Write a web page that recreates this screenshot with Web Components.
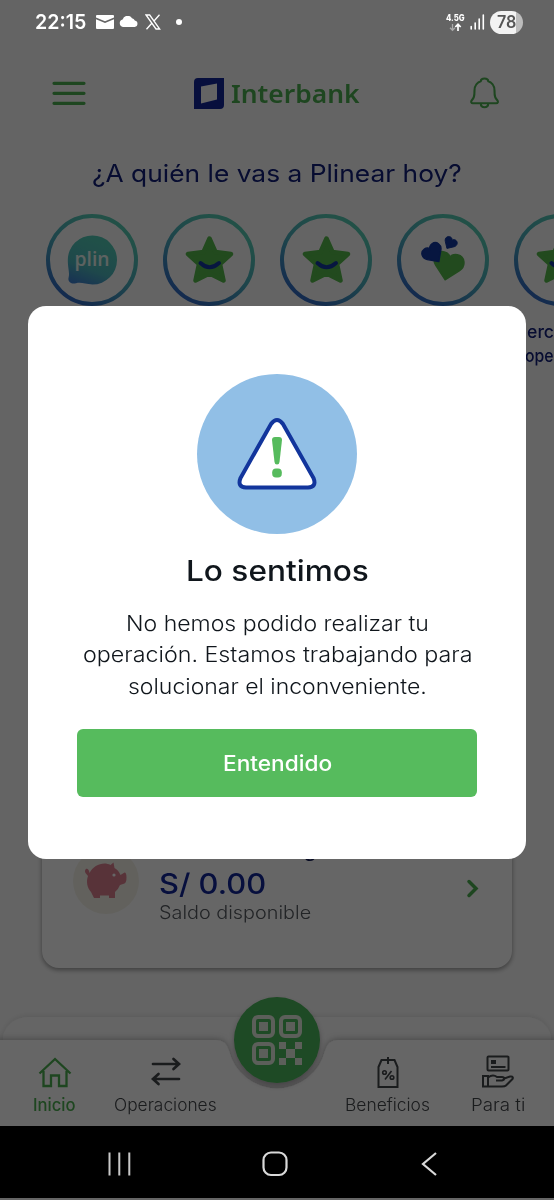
<!DOCTYPE html>
<html lang="es"><head><meta charset="utf-8"><title>Interbank</title>
<style>
html,body{margin:0;width:554px;height:1200px;overflow:hidden;background:#000}
body{font-family:Inter,"Noto Sans",sans-serif}
</style></head><body>
<bank-app></bank-app>
<script>
const define=(name,html,extra)=>{
  const t=document.createElement('template');t.innerHTML=html;
  customElements.define(name,class extends HTMLElement{
    constructor(){super();this.attachShadow({mode:'open'}).append(t.content.cloneNode(true));}
    connectedCallback(){if(extra)extra(this,this.shadowRoot);}
  });
};

/* One line of text set to a given width: w = width in px */
define('fit-text',`<style>:host{display:block;white-space:nowrap;text-align:left;flex:none}
span{display:inline-block;transform-origin:0 50%}</style><span><slot></slot></span>`,(h,r)=>{
  const w=+h.getAttribute('w'),s=r.querySelector('span');
  h.style.width=w+'px';
  s.style.transform='scaleX('+w/s.offsetWidth+')';
});

define('status-bar',`<style>
:host{display:flex;height:44px;box-sizing:border-box;padding:0 31px 0 35px;align-items:center;color:#fff;position:relative;z-index:3}
.time{font:600 20px/44px Inter,sans-serif}
svg{display:block;flex:none}
.net{font:800 9px/10px Inter,sans-serif;margin-left:auto;margin-right:5px}
.bat{width:33px;height:23px;border-radius:12px;background:linear-gradient(90deg,#f2f2f2 78%,#bcbcbc 78%);color:#555;
font:600 17px/23px Inter,sans-serif;padding-left:7px;box-sizing:border-box;margin-left:5px}
</style>
<fit-text class="time" w="51">22:15</fit-text>
<svg width="18" height="14" viewBox="0 0 18 14" style="margin-left:10px"><path d="M1 0h16Q18 0 18 1v1.500L9 6.300 0 2.500V1Q0 0 1 0zM0 4.200l9 3.800 9-3.800V13q0 1-1 1H1Q0 14 0 13z" fill="#fff"/></svg>
<svg width="19" height="12" viewBox="0 0 19 12" style="margin-left:5px"><path d="M4 11a3.900 3.900 0 0 1-.4-7.600A5.200 5.200 0 0 1 13 2.300 4.200 4.200 0 0 1 15.800 4.500 3.300 3.300 0 0 1 15.700 11z" fill="#fff"/></svg>
<svg width="16" height="16" viewBox="0 0 16 16" style="margin-left:7px"><path d="M1 1h3.700l10 14H11zM14.500.700 9 7M6.800 9.200 1.500 15.300" fill="none" stroke="#fff" stroke-width="1.300"/></svg>
<svg width="6" height="6" style="margin-left:15px"><circle cx="3" cy="3" r="3" fill="#fff"/></svg>
<div class="net"><fit-text w="19">4.5G</fit-text><svg width="18" height="9" viewBox="0 0 18 9"><path d="M6.500 1v6M4 4.800l2.500 2.500L9 4.800" fill="none" stroke="#aaa" stroke-width="1.300"/><path d="M12 8V1.500M9.300 4 12 1.300 14.700 4" fill="none" stroke="#fff" stroke-width="1.700"/></svg></div>
<svg width="15" height="16" viewBox="0 0 15 16"><path d="M1.200 12.500V15M5.200 9V15M9.200 5V15M13.300 1V15" stroke="#fff" stroke-width="1.600" stroke-linecap="round"/></svg>
<div class="bat"><fit-text w="19">78</fit-text></div>`);

define('app-header',`<style>
:host{display:flex;height:98px;box-sizing:border-box;padding:0 55px 0 52px;align-items:center;justify-content:space-between}
svg{display:block;flex:none}.logo{display:flex;align-items:center;margin-left:-2px;gap:7px;color:#4cae50;font:600 26px/31px "Noto Sans",sans-serif}
</style>
<svg width="34" height="28" viewBox="0 0 34 28"><path d="M2 4.300h30M2 14.300h30M2 24.300h30" stroke="#4cae50" stroke-width="3.200" stroke-linecap="round"/></svg>
<div class="logo"><svg width="30" height="31" viewBox="0 0 30 31"><path fill-rule="evenodd" d="M4 0h26v27q0 4-4 4H0V4q0-4 4-4zM7 8.500v17l16-4v-16z" fill="#12279a"/></svg><fit-text w="129">Interbank</fit-text></div>
<svg width="29" height="32" viewBox="0 0 29 32"><path d="M4.500 13.500C4.500 8 8 5 10.700 4.200c.3-3.700 7.300-3.700 7.600 0 2.700.800 6.200 3.800 6.200 9.300 0 6.500.8 7.500 2.600 9.500 1.500 1.700.7 3.300-1 3.300H3c-1.700 0-2.500-1.600-1-3.300 1.700-2 2.500-3 2.500-9.500zM10.800 26.500c0 5 7.400 5 7.400 0" fill="none" stroke="#4cae50" stroke-width="2.100"/></svg>`);

const star='<path d="M24.500 3 30.500 16.500 46 18.500 35 28.500 38.500 45 24.500 38 10.500 45 14 28.500 3 18.500 18.500 16.500z" fill="#55b84b" stroke="#55b84b" stroke-width="4.500" stroke-linejoin="round"/><path d="M15.500 27.500q9 8.500 18.500 0" fill="none" stroke="#1237a0" stroke-width="4" stroke-linecap="round"/>';
const plin='<defs><linearGradient id="b" x1=".2" y1="1" x2=".55" y2=".1"><stop offset="0" stop-color="#3d7fd0"/><stop offset=".4" stop-color="#4db5bb"/><stop offset="1" stop-color="#52c8b5"/></linearGradient></defs><path d="M24.500 0A24.500 24.500 0 0 1 24.500 49C17 48.500 13 46.200 8 47.700 3 49-.5 46 .6 42c1.300-5-.8-9-.8-17.500A24.500 24.500 0 0 1 24.500 0z" fill="url(#b)"/><text x="6.500" y="30" font-family="Open Sans,sans-serif" font-weight="600" font-size="20" textLength="35" lengthAdjust="spacingAndGlyphs" fill="#e8f6f2">plin</text>';
const heartPath='<path d="M0 10L-9 1C-13-3-11-10-5-10-2-10 0-8 0-6 0-8 2-10 5-10 11-10 13-3 9 1Z" stroke-width="1.500" stroke-linejoin="round" ';
const hearts=heartPath+'transform="translate(29 31) rotate(12) scale(1.330)" fill="#55b84b" stroke="#55b84b"/>'
 +heartPath+'transform="translate(14.500 18.500) rotate(-35) scale(.930)" fill="#1237a0" stroke="#1237a0"/>'
 +heartPath+'transform="translate(31 8) rotate(32) scale(.580)" fill="#1237a0" stroke="#1237a0"/>';
define('contact-ring',`<style>:host{display:block;width:92px;flex:none;color:#12207a}svg{display:block}
.l{font:500 18px/24px Inter,sans-serif;margin-top:14px;width:40px;display:flex;flex-direction:column;align-items:flex-end}</style>
<svg width="92" height="92" viewBox="0 0 92 92"><defs><linearGradient id="g" x1=".2" y1=".9" x2=".7" y2=".1"><stop offset="0" stop-color="#326cc4"/><stop offset=".5" stop-color="#4aabbb"/><stop offset="1" stop-color="#55c9b2"/></linearGradient></defs><circle cx="46" cy="46" r="44" fill="none" stroke="url(#g)" stroke-width="4"/><g class="i" transform="translate(22 21.500)"></g></svg>
<div class="l"><slot></slot></div>`,(h,r)=>{
  const k=h.getAttribute('kind');
  r.querySelector('.i').innerHTML=k=='plin'?plin:k=='hearts'?hearts:star;
});

define('plin-section',`<style>:host{display:block;height:288px}
.t{font:400 24px/32px Inter,sans-serif;color:#12207a;display:flex;justify-content:center;padding-top:16px}
.r{display:flex;gap:25px;padding:24px 0 0 46px}</style>
<div class="t"><fit-text w="370">¿A quién le vas a Plinear hoy?</fit-text></div>
<div class="r"><contact-ring kind="plin"></contact-ring><contact-ring kind="star"></contact-ring><contact-ring kind="star"></contact-ring><contact-ring kind="hearts"></contact-ring><contact-ring kind="star"><fit-text w="43">Merc</fit-text><fit-text w="29">ope</fit-text></contact-ring></div>`);

define('account-card',`<style>:host{display:flex;margin:350px 42px 0;height:188px;background:#fff;border-radius:17px;box-sizing:border-box;padding:0 33px 0 31px;box-shadow:0 2px 5px #0006;align-items:flex-start}
.pig{width:66px;height:66px;border-radius:50%;background:#f5f3e9;margin-top:68px}
.tx{margin:59px auto 0 20px;display:grid;width:160px}
.n{font:600 19px/23px Inter,sans-serif;color:#111a55}.a{font:500 28px/38px Inter,sans-serif;color:#12279a;margin-top:3px}.s{font:300 18px/21px Inter,sans-serif;color:#555a60;margin-top:-1px}
svg{display:block}.c{margin-top:99px}</style>
<svg class="pig" viewBox="0 0 66 66"><path d="M12.500 25c-2-4 3-7 4 0 4-8 14-12 21-8l3-2.500 1 5.500q4 2 6 7l4-2.500q2 0 2 5t-2 6l-4.500 1.500q-2 5-5 7v6h-6v-2.500H27V50h-6l-3-6C14 40 13 33 15 28z" fill="#dc7f90"/><circle cx="41" cy="27" r="1.600" fill="#fff"/></svg>
<div class="tx"><fit-text class="n" w="157">Cuenta Sueldo g</fit-text><fit-text class="a" w="107">S/ 0.00</fit-text><fit-text class="s" w="152">Saldo disponible</fit-text></div>
<svg class="c" width="13" height="19" viewBox="0 0 13 19"><path d="M3 2.500l7 7-7 7" fill="none" stroke="#4cae50" stroke-width="3.500" stroke-linecap="round"/></svg>`);

define('tab-item',`<style>:host{display:flex;flex-direction:column;align-items:center;color:#43464a;flex:none}
:host([on]){color:#4cae50}
svg{display:block;width:36px;height:36px;fill:none;stroke:currentColor;stroke-width:2}
fit-text{font:300 17px/22px Inter,sans-serif;margin-top:4px}:host([on]) fit-text{font-weight:500}</style>
<svg viewBox="0 0 36 36"></svg><fit-text><slot></slot></fit-text>`,(h,r)=>{
  const I={home:'<path d="M2.500 19.500 18 5l15.500 14.500M6.500 17V32H14V21.500h8V32h7.500V17" stroke-width="2.300"/>',
  ops:'<path d="M5 10h25M25.500 5l5.500 5-5.500 5M31 25H6M10.500 20 5 25l5.500 5" stroke-width="2.700" stroke-linecap="round"/>',
  ben:'<path d="M8.500 13l3-7h13l3 7v20h-19zM18 3v7"/><circle cx="14.500" cy="18.500" r="1.800" stroke-width="1.600"/><circle cx="22" cy="23.500" r="1.800" stroke-width="1.600"/><path d="M21.500 17 15 25.500" stroke-width="1.600"/>',
  para:'<rect x="7.500" y="2.500" width="21" height="14" rx="1"/><path d="M11 13h14.500M3 22h5v10.500H3zM8 23.500c4-3 7-2 9-.500h5c3 0 3 3 0 3.500h-6M23 25l7-2.500c3-.600 3.500 1.500 2 3L26 31.500q-1 1-4 1H8"/><rect x="12" y="7" width="3" height="2"/>'};
  r.querySelector('svg').innerHTML=I[h.getAttribute('icon')];
});

define('tab-bar',`<style>:host{display:block;position:relative;height:110px;margin-top:48px}
.bg{position:absolute;left:0;top:-30px;overflow:hidden}
.row{position:relative;display:flex;justify-content:space-between;padding:38px 29px 0 33px}
.g{display:flex;gap:38px}.g+.g{gap:41px}</style>
<svg class="bg" width="554" height="140" viewBox="0 0 554 140"><defs><filter id="s" x="-20%" y="-40%" width="140%" height="180%"><feDropShadow dx="0" dy="-1" stdDeviation="3" flood-color="#000" flood-opacity=".28"/></filter><filter id="q" x="-30%" y="-30%" width="160%" height="160%"><feDropShadow dx="0" dy="3" stdDeviation="2.500" flood-color="#554455" flood-opacity=".45"/></filter></defs>
<path d="M3 140V50Q9 31 30 31H524Q545 31 551 50V140z" fill="#fff" filter="url(#s)" opacity=".4"/>
<path d="M-10 160V54H216Q226 54 229 65A49.500 49.500 0 0 0 325 65Q328 54 338 54H564V160z" fill="#fff" filter="url(#s)"/>
<circle cx="277" cy="54" r="43" fill="#4cb85c" filter="url(#q)"/>
<g fill="none" stroke="#e5eee1" stroke-width="4"><rect x="254" y="31" width="19" height="19" rx="4"/><rect x="281" y="31" width="19" height="19" rx="4"/><rect x="254" y="58" width="19" height="19" rx="4"/></g>
<path d="M259 36h9v9h-9zM286 36h9v9h-9zM259 63h9v9h-9zM279 56h7v7h-7zM295 56h7v7h-7zM286 63h9v9h-9zM279 72h7v7h-7zM295 72h7v7h-7z" fill="#e5eee1"/></svg>
<div class="row"><div class="g"><tab-item icon="home" on w="43">Inicio</tab-item><tab-item icon="ops" w="103">Operaciones</tab-item></div><div class="g"><tab-item icon="ben" w="85">Beneficios</tab-item><tab-item icon="para" w="54">Para ti</tab-item></div></div>`,(h,r)=>{
  r.querySelectorAll('tab-item').forEach(t=>{
    const f=t.shadowRoot.querySelector('fit-text'),s=f.shadowRoot.querySelector('span'),w=+t.getAttribute('w');
    f.style.width=w+'px';s.style.transform='scaleX('+w/s.offsetWidth+')';
  });
});

define('system-nav',`<style>:host{display:block;height:72px;background:#000;border-bottom:2px solid #666;position:relative;z-index:3}
div{display:flex;justify-content:space-between;align-items:center;height:76px;padding:0 116px 0 107px}svg:nth-child(2){margin-left:-2px}</style>
<div><svg width="24" height="26"><path d="M2.500 1.500v23M12.300 1.500v23M22.300 1.500v23" stroke="#c9c9c9" stroke-width="2"/></svg>
<svg width="26" height="26"><rect x="1.500" y="1.500" width="23" height="22.500" rx="7.500" fill="none" stroke="#d9d9d9" stroke-width="2.200"/></svg>
<svg width="18" height="26"><path d="M16 2 3 13l13 11" fill="none" stroke="#d9d9d9" stroke-width="2.200"/></svg></div>`);

define('error-dialog',`<style>:host{position:absolute;z-index:2;left:0;top:0;width:554px;height:1126px;background:#0009;display:block}
.b{margin:306px 28px 0;height:553px;background:#fff;border-radius:18px;box-sizing:border-box;padding-top:68px;display:flex;flex-direction:column;align-items:center}
svg{display:block}h1{margin:19px 0 0;font:500 29px/36px Inter,sans-serif;color:#10161c}
.p{margin-top:19px;font:300 21px/31.300px Inter,sans-serif;color:#10161c;display:flex;flex-direction:column;align-items:center}
button{all:unset;margin-top:27px;width:400px;height:68px;border-radius:6px;background:#56bb5d;color:#fff;font:500 21px/70px Inter,sans-serif;display:flex;justify-content:center}</style>
<div class="b"><svg width="160" height="160" viewBox="0 0 160 160"><circle cx="80" cy="80" r="80" fill="#91bfe6"/><path d="M74 50Q80 42 86 50L116.500 104Q120 113 111 113.500H49Q40 113 43.500 104z" fill="#fff" stroke="#12359c" stroke-width="4"/><path d="M75 66q0-3 3-3h4q3 0 3 3l-2.500 22q-.3 2.500-2.500 2.500t-2.500-2.500z" fill="#56bb5d"/><rect x="75.200" y="94.500" width="9.600" height="9" rx="3.800" fill="#56bb5d"/></svg>
<h1><fit-text w="183">Lo sentimos</fit-text></h1>
<div class="p"><fit-text w="303">No hemos podido realizar tu</fit-text><fit-text w="389">operación. Estamos trabajando para</fit-text><fit-text w="299">solucionar el inconveniente.</fit-text></div>
<button><fit-text w="109">Entendido</fit-text></button></div>`);

define('bank-app',`<style>:host{display:block;position:relative;width:554px;height:1200px;overflow:hidden;background:#fbfbfb}
main{display:flex;flex-direction:column;height:1126px;overflow:hidden}account-card{flex:none}
plin-section,app-header,status-bar{flex:none}tab-bar{flex:none}</style>
<main><status-bar></status-bar><app-header></app-header><plin-section></plin-section><account-card></account-card><tab-bar></tab-bar></main><system-nav></system-nav><error-dialog></error-dialog>`);
</script></body></html>
